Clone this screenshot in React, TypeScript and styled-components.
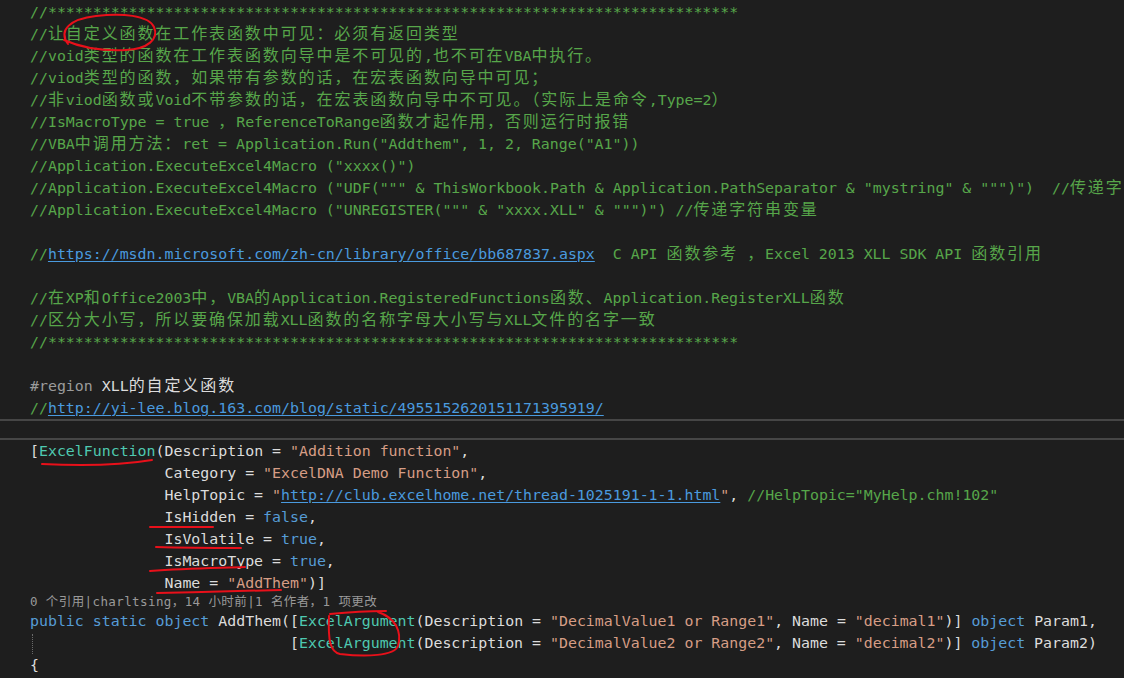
import styled, { createGlobalStyle } from "styled-components";

type Kind = "c" | "l" | "k" | "s" | "t" | "p" | "r";
type Tok = [Kind, string];

const GlobalStyle = createGlobalStyle`
  html, body {
    margin: 0;
    padding: 0;
    background: #1e1e1e;
  }
`;

const colors: Record<Kind, string> = {
  c: "#57a64a",
  l: "#4a9ade",
  k: "#569cd6",
  s: "#d69d85",
  t: "#4ec9b0",
  p: "#dcdcdc",
  r: "#9b9b9b",
};

const STARS = "//" + "*".repeat(77);
const IND = " ".repeat(15);

const top: Tok[][] = [
  [["c", STARS]],
  [["c", "//让自定义函数在工作表函数中可见：必须有返回类型"]],
  [["c", "//void类型的函数在工作表函数向导中是不可见的,也不可在VBA中执行。"]],
  [["c", "//viod类型的函数，如果带有参数的话，在宏表函数向导中可见；"]],
  [["c", "//非viod函数或Void不带参数的话，在宏表函数向导中不可见。（实际上是命令,Type=2）"]],
  [["c", "//IsMacroType = true ，ReferenceToRange函数才起作用，否则运行时报错"]],
  [["c", '//VBA中调用方法：ret = Application.Run("Addthem", 1, 2, Range("A1"))']],
  [["c", '//Application.ExecuteExcel4Macro ("xxxx()")']],
  [["c", '//Application.ExecuteExcel4Macro ("UDF(""" & ThisWorkbook.Path & Application.PathSeparator & "mystring" & """)")  //传递字符串变量']],
  [["c", '//Application.ExecuteExcel4Macro ("UNREGISTER(""" & "xxxx.XLL" & """)") //传递字符串变量']],
  [],
  [
    ["c", "//"],
    ["l", "https://msdn.microsoft.com/zh-cn/library/office/bb687837.aspx"],
    ["c", "  C API 函数参考 ，Excel 2013 XLL SDK API 函数引用"],
  ],
  [],
  [["c", "//在XP和Office2003中，VBA的Application.RegisteredFunctions函数、Application.RegisterXLL函数"]],
  [["c", "//区分大小写，所以要确保加载XLL函数的名称字母大小写与XLL文件的名字一致"]],
  [["c", STARS]],
  [],
  [
    ["r", "#region"],
    ["p", " XLL的自定义函数"],
  ],
  [
    ["c", "//"],
    ["l", "http://yi-lee.blog.163.com/blog/static/4955152620151171395919/"],
  ],
];

const attrs: Tok[][] = [
  [["p", "["], ["t", "ExcelFunction"], ["p", "(Description = "], ["s", '"Addition function"'], ["p", ","]],
  [["p", IND + "Category = "], ["s", '"ExcelDNA Demo Function"'], ["p", ","]],
  [
    ["p", IND + "HelpTopic = "],
    ["s", '"'],
    ["l", "http://club.excelhome.net/thread-1025191-1-1.html"],
    ["s", '"'],
    ["p", ", "],
    ["c", '//HelpTopic="MyHelp.chm!102"'],
  ],
  [["p", IND + "IsHidden = "], ["k", "false"], ["p", ","]],
  [["p", IND + "IsVolatile = "], ["k", "true"], ["p", ","]],
  [["p", IND + "IsMacroType = "], ["k", "true"], ["p", ","]],
  [["p", IND + "Name = "], ["s", '"AddThem"'], ["p", ")]"]],
];

const argLine = (n: number, lead: Tok[], tail: string): Tok[] => [
  ...lead,
  ["t", "ExcelArgument"],
  ["p", "(Description = "],
  ["s", `"DecimalValue${n} or Range${n}"`],
  ["p", ", Name = "],
  ["s", `"decimal${n}"`],
  ["p", ")] "],
  ["k", "object"],
  ["p", ` Param${n}${tail}`],
];

const method: Tok[][] = [
  argLine(1, [["k", "public static object"], ["p", " AddThem(["]], ","),
  argLine(2, [["p", " ".repeat(29) + "["]], ")"),
  [["p", "{"]],
];

const CJK = /([\u3000-\u303f\u4e00-\u9fff\uff00-\uffef]+)/;

const Run = ({ text }: { text: string }) => (
  <>
    {text.split(CJK).map((part, i) =>
      part === "" ? null : CJK.test(part) ? <Wide key={i}>{part}</Wide> : <span key={i}>{part}</span>
    )}
  </>
);

const CodeLine = ({ toks, guide }: { toks: Tok[]; guide?: boolean }) => (
  <Line $guide={guide}>
    {toks.map(([kind, text], i) => (
      <Token key={i} $kind={kind}>
        <Run text={text} />
      </Token>
    ))}
  </Line>
);

export default function App() {
  return (
    <>
      <GlobalStyle />
      <Editor>
        <Pane $top={1}>
          {top.map((toks, i) => (
            <CodeLine key={i} toks={toks} />
          ))}
        </Pane>
        <Fold />
        <Pane>
          {attrs.map((toks, i) => (
            <CodeLine key={i} toks={toks} />
          ))}
          <Lens>
            <Run text="0 个引用|charltsing，14 小时前|1 名作者，1 项更改" />
          </Lens>
          {method.map((toks, i) => (
            <CodeLine key={i} toks={toks} guide={i === 1} />
          ))}
        </Pane>
        <Marks viewBox="0 0 1124 678" fill="none" stroke="#e8101a" strokeWidth="2" strokeLinecap="round">
          <path d="M68 44 C58 30 70 19 96 16 C122 13 148 15 154 27 C159 39 148 49 126 50 C104 51 82 48 64 40" />
          <path d="M42 464 C80 466 122 465 152 460" />
          <path d="M150 527 L213 527" />
          <path d="M156 547 C190 548 220 548 241 548" />
          <path d="M150 571 C190 568 222 568 245 567" />
          <path d="M157 593 C200 592 250 591 281 590" />
          <path d="M330 614 C350 612 372 611 386 611 M378 612 C396 618 402 632 398 646 C394 656 366 657 340 654 C330 652 328 640 329 616" />
        </Marks>
      </Editor>
    </>
  );
}

const Editor = styled.div`
  position: relative;
  width: 1124px;
  height: 678px;
  overflow: hidden;
  background: #1e1e1e;
`;

const Pane = styled.div<{ $top?: number }>`
  display: flex;
  flex-direction: column;
  padding-left: 30px;
  padding-top: ${(p) => p.$top ?? 0}px;
`;

const Line = styled.div<{ $guide?: boolean }>`
  position: relative;
  height: 22px;
  line-height: 22px;
  white-space: pre;
  font-family: "DejaVu Sans Mono", "Liberation Mono", monospace;
  font-size: 14.9px;
  color: #dcdcdc;
  ${(p) =>
    p.$guide &&
    `
    &::before {
      content: "";
      position: absolute;
      left: 2px;
      top: 2px;
      bottom: 0;
      border-left: 1px dotted #6a6a6a;
    }
  `}
`;

const Token = styled.span<{ $kind: Kind }>`
  color: ${(p) => colors[p.$kind]};
  text-decoration: ${(p) => (p.$kind === "l" ? "underline" : "none")};
  text-underline-offset: 2px;
`;

const Wide = styled.span`
  font-family: "Noto Sans CJK SC", sans-serif;
  font-size: 16px;
  line-height: 16px;
  letter-spacing: 1.9px;
`;

const Fold = styled.div`
  box-sizing: border-box;
  height: 21px;
  border-top: 2px solid #464646;
  border-bottom: 2px solid #464646;
`;

const Lens = styled.div`
  height: 16px;
  line-height: 16px;
  white-space: pre;
  font-family: "DejaVu Sans Mono", monospace;
  font-size: 11.5px;
  color: #999999;
  span {
    font-size: 12.5px;
    line-height: 12px;
    letter-spacing: 0.4px;
  }
`;

const Marks = styled.svg`
  position: absolute;
  left: 0;
  top: 0;
  width: 1124px;
  height: 678px;
  pointer-events: none;
`;
